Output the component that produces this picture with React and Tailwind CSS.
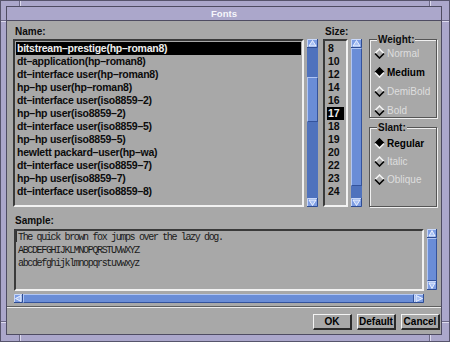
import React from 'react';

const NAMES = [
  'bitstream–prestige(hp–roman8)',
  'dt–application(hp–roman8)',
  'dt–interface user(hp–roman8)',
  'hp–hp user(hp–roman8)',
  'dt–interface user(iso8859–2)',
  'hp–hp user(iso8859–2)',
  'dt–interface user(iso8859–5)',
  'hp–hp user(iso8859–5)',
  'hewlett packard–user(hp–wa)',
  'dt–interface user(iso8859–7)',
  'hp–hp user(iso8859–7)',
  'dt–interface user(iso8859–8)',
];

const SIZES = ['8', '10', '12', '14', '16', '17', '18', '19', '20', '22', '23', '24'];

const WEIGHTS = [
  { label: 'Normal', on: false, enabled: false },
  { label: 'Medium', on: true, enabled: true },
  { label: 'DemiBold', on: false, enabled: false },
  { label: 'Bold', on: false, enabled: false },
];

const SLANTS = [
  { label: 'Regular', on: true, enabled: true },
  { label: 'Italic', on: false, enabled: false },
  { label: 'Oblique', on: false, enabled: false },
];

// little bevelled arrow button used on every scrollbar
function Arrow({ dir, w = 11, h = 9 }) {
  const tri = {
    up: `2,${h - 2} ${w / 2},1.5 ${w - 2},${h - 2}`,
    down: `2,2 ${w / 2},${h - 1.5} ${w - 2},2`,
    left: `${w - 2},1.5 1.5,${h / 2} ${w - 2},${h - 1.5}`,
    right: `2,1.5 ${w - 1.5},${h / 2} 2,${h - 1.5}`,
  }[dir];
  return (
    <svg width={w} height={h} viewBox={`0 0 ${w} ${h}`} className="block shrink-0">
      <rect x="0" y="0" width={w} height={h} fill="#7d9de3" />
      <polyline points={`0.5,${h} 0.5,0.5 ${w},0.5`} fill="none" stroke="#c9d8fa" strokeWidth="1" />
      <polyline points={`0,${h - 0.5} ${w - 0.5},${h - 0.5} ${w - 0.5},0`} fill="none" stroke="#2e4c92" strokeWidth="1" />
      <polygon points={tri} fill="#a9c1f4" stroke="#f4f7ff" strokeWidth="0.9" />
    </svg>
  );
}

function Thumb({ className }) {
  return (
    <div
      className={`border border-b-[#34539c] border-l-[#b1c6f4] border-r-[#34539c] border-t-[#b1c6f4] bg-[#6a8dd7] ${className}`}
    />
  );
}

function Diamond({ on }) {
  return (
    <svg width="11" height="11" viewBox="0 0 11 11" className="block shrink-0">
      {on && <polygon points="5.5,0.8 10.2,5.5 5.5,10.2 0.8,5.5" fill="#000" />}
      <polyline points="1,5.5 5.5,1 10,5.5" fill="none" stroke={on ? '#000' : '#f4f4f4'} strokeWidth="1.6" />
      <polyline points="1,5.5 5.5,10 10,5.5" fill="none" stroke={on ? '#f4f4f4' : '#000'} strokeWidth="1.6" />
    </svg>
  );
}

function Radio({ label, on, enabled }) {
  return (
    <div className="flex h-[13px] items-center gap-[2px]">
      <Diamond on={on} />
      <span className={`leading-[13px] ${enabled ? 'font-bold text-black' : 'font-normal text-[#dedede]'}`}>{label}</span>
    </div>
  );
}

const sunken = 'border-2 border-b-[#f2f2f2] border-l-[#3a3a3a] border-r-[#f2f2f2] border-t-[#3a3a3a]';
const etched = 'border border-[#555555] shadow-[inset_1px_1px_0_#f0f0f0,1px_1px_0_#f0f0f0]';

export default function App() {
  return (
    <div className="relative flex h-[342px] w-[450px] flex-col border border-[#56546c] bg-[#aba7cb] pb-[6px] pl-[5px] pr-[7px] pt-[5px] font-['Liberation_Sans',Arial,sans-serif] text-[10px] font-bold text-[#0c0c0c]">
      {/* resize-handle notches in the window frame */}
      <div className="absolute left-[18px] top-0 h-[5px] w-[2px] border-l border-r border-l-[#6c6987] border-r-[#dcdaee]" />
      <div className="absolute right-[18px] top-0 h-[5px] w-[2px] border-l border-r border-l-[#6c6987] border-r-[#dcdaee]" />
      <div className="absolute bottom-0 left-[18px] h-[6px] w-[2px] border-l border-r border-l-[#6c6987] border-r-[#dcdaee]" />
      <div className="absolute bottom-0 right-[18px] h-[6px] w-[2px] border-l border-r border-l-[#6c6987] border-r-[#dcdaee]" />
      <div className="absolute left-0 top-[19px] h-[2px] w-[5px] border-b border-t border-b-[#dcdaee] border-t-[#6c6987]" />
      <div className="absolute right-0 top-[19px] h-[2px] w-[7px] border-b border-t border-b-[#dcdaee] border-t-[#6c6987]" />
      <div className="absolute bottom-[18px] left-0 h-[2px] w-[5px] border-b border-t border-b-[#dcdaee] border-t-[#6c6987]" />
      <div className="absolute bottom-[18px] right-0 h-[2px] w-[7px] border-b border-t border-b-[#dcdaee] border-t-[#6c6987]" />

      <div className="flex flex-1 flex-col border border-[#4e4c62] bg-[#a8a8a8]">
        <div className="h-[14px] border-b border-[#4e4c62] bg-[#aba7cb] text-center text-[9.5px] leading-[14px] text-[#f6f6fb]">
          Fonts
        </div>

        <div className="flex flex-1 flex-col pt-[4px]">
          {/* top: name list, size list, weight / slant */}
          <div className="flex items-start pl-[6px] pr-[4px]">
            <div className="w-[305px]">
              <div className="h-[14px] pl-[2px] leading-[13px]">Name:</div>
              <div className="flex gap-[3px]">
                <div className={`h-[168px] w-[291px] p-[1px] ${sunken}`}>
                  {NAMES.map((n, i) => (
                    <div
                      key={i}
                      className={`h-[13px] whitespace-nowrap pl-[1px] text-[10.5px] leading-[13px] tracking-[-0.25px] ${i === 0 ? 'bg-black text-[#eeeeee]' : ''}`}
                    >
                      {n}
                    </div>
                  ))}
                </div>
                <div className="flex h-[168px] w-[11px] flex-col bg-[#4f72bd]">
                  <Arrow dir="up" />
                  <div className="h-[29px]" />
                  <Thumb className="h-[45px]" />
                  <div className="flex-1" />
                  <Arrow dir="down" />
                </div>
              </div>
            </div>

            <div className="ml-[5px] w-[39px]">
              <div className="h-[14px] pl-[2px] leading-[13px]">Size:</div>
              <div className="flex gap-[3px]">
                <div className={`h-[168px] w-[25px] px-[2px] py-[1px] ${sunken}`}>
                  {SIZES.map((s) => (
                    <div
                      key={s}
                      className={`h-[13px] pl-[1px] text-[10.5px] leading-[13px] ${s === '17' ? 'bg-black text-[#eeeeee]' : ''}`}
                    >
                      {s}
                    </div>
                  ))}
                </div>
                <div className="flex h-[168px] w-[11px] flex-col bg-[#4f72bd]">
                  <Arrow dir="up" />
                  <Thumb className="h-[138px]" />
                  <div className="flex-1" />
                  <Arrow dir="down" />
                </div>
              </div>
            </div>

            <div className="ml-[7px] w-[68px] pt-[8px]">
              <fieldset className={`pl-[4px] ${etched}`}>
                <legend className="ml-[3px] bg-[#a8a8a8] px-[1px] leading-[13px]">Weight:</legend>
                <div className="flex flex-col gap-[6px] pt-[1px]">
                  {WEIGHTS.map((w) => (
                    <Radio key={w.label} {...w} />
                  ))}
                </div>
              </fieldset>
              <fieldset className={`mt-[3px] h-[86px] pl-[4px] ${etched}`}>
                <legend className="ml-[3px] bg-[#a8a8a8] px-[1px] leading-[13px]">Slant:</legend>
                <div className="flex flex-col gap-[5px] pt-[3px]">
                  {SLANTS.map((s) => (
                    <Radio key={s.label} {...s} />
                  ))}
                </div>
              </fieldset>
            </div>
          </div>

          {/* sample text */}
          <div className="mt-[7px] pl-[7px] pr-[4px]">
            <div className="h-[15px] pl-[1px] leading-[13px]">Sample:</div>
            <div className="flex gap-[3px]">
              <div
                className={`h-[62px] w-[410px] pl-[1px] font-['Liberation_Mono','Courier_New',monospace] text-[10px] font-normal leading-[13px] tracking-[-1.35px] text-[#1a1a1a] ${sunken}`}
              >
                <div className="whitespace-nowrap">
                  <span className="mr-[1px] ml-[-1px] inline-block h-[11px] w-[1px] align-[-2px] bg-[#333333]" />
                  The quick brown fox jumps over the lazy dog.
                </div>
                <div className="whitespace-nowrap pl-[1px]">ABCDEFGHIJKLMNOPQRSTUVWXYZ</div>
                <div className="whitespace-nowrap pl-[1px]">abcdefghijklmnopqrstuvwxyz</div>
              </div>
              <div className="flex h-[61px] w-[10px] flex-col bg-[#4f72bd]">
                <Arrow dir="up" w={10} />
                <Thumb className="flex-1" />
                <Arrow dir="down" w={10} />
              </div>
            </div>
            <div className="mt-[3px] flex h-[9px] w-[410px] bg-[#4f72bd]">
              <Arrow dir="left" w={9} />
              <Thumb className="flex-1" />
              <Arrow dir="right" w={10} />
            </div>
          </div>

          {/* separator */}
          <div className="mt-[3px] h-[2px] border-b border-t border-b-[#eeeeee] border-t-[#5e5e5e]" />

          {/* buttons */}
          <div className="mt-[6px] flex justify-end gap-[5px] pr-[1px]">
            {['OK', 'Default', 'Cancel'].map((b) => (
              <button
                key={b}
                className="h-[16px] w-[39px] border-b-2 border-l border-r-2 border-t border-b-[#2a2a2a] border-l-[#f4f4f4] border-r-[#2a2a2a] border-t-[#f4f4f4] bg-[#a8a8a8] text-center text-[10px] font-bold leading-[12px] text-black"
              >
                {b}
              </button>
            ))}
          </div>
        </div>
      </div>
    </div>
  );
}
